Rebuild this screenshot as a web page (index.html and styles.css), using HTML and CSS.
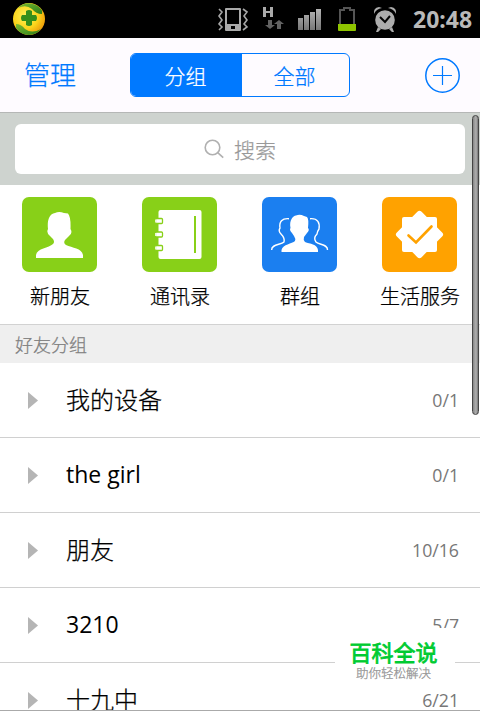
FILE: index.html
```html
<!DOCTYPE html>
<html lang="zh-CN">
<head>
<meta charset="utf-8">
<title>联系人</title>
<link rel="stylesheet" href="styles.css">
</head>
<body>
<div class="screen">
  <div class="status">
    <svg class="status-icons" width="405" height="38" viewBox="0 0 405 38">
      <defs>
        <radialGradient id="ball" cx=".4" cy=".4" r=".65"><stop offset="0" stop-color="#fff25a"/><stop offset=".6" stop-color="#fbd51c"/><stop offset="1" stop-color="#ed9a08"/></radialGradient>
        <linearGradient id="metal" x1="0" y1="0" x2="0" y2="1"><stop offset="0" stop-color="#b5b5b5"/><stop offset="1" stop-color="#777"/></linearGradient>
        <linearGradient id="leaf" x1="0" y1="0" x2="1" y2="1"><stop offset="0" stop-color="#7dbd32"/><stop offset="1" stop-color="#287c18"/></linearGradient>
      </defs>
      <circle cx="29" cy="19" r="16" fill="url(#ball)"/>
      <path d="M18 8C24 1 35 2 41 9Q43 11 42 14Q36 14 32 9Q26 4 18 8Z" fill="url(#leaf)"/>
      <path d="M16 24Q21 24 25 29Q32 34 41 29C35 37 22 37 16 28Z" fill="url(#leaf)"/>
      <path d="M26 11q3-2 6 0v4h4q2 3 0 6h-4v4q-3 2-6 0v-4h-4q-2-3 0-6h4Z" fill="#368f1b"/>
      <g fill="none" stroke="#a6a6a6" stroke-width="1.6">
        <path d="M219 9l3 3-3 4 3 4-3 4 3 3-3 3M243 9l4 3-3 4 3 4-3 4 3 3-4 3"/>
      </g>
      <path fill="#aaa" fill-rule="evenodd" d="M226 8h14q1 0 1 1v21q0 1-1 1h-14q-1 0-1-1V9q0-1 1-1Zm1 2v14h12V10Zm4 16v3h4v-3Z"/>
      <path fill="#aaa" d="M263 7h3v4h4V7h3v10h-3v-4h-4v4h-3Z"/>
      <path fill="#626262" d="M268 20h4v5h3l-5 4-5-4h3ZM277 29h4v-5h3l-5-4-5 4h3Z"/>
      <path fill="url(#metal)" d="M298 18h5v12h-5ZM304 15h5v15h-5ZM310 12h5v18h-5ZM316 9h5v21h-5Z"/>
      <path d="M340 24V10h4V8h6v2h4v14" fill="none" stroke="#555" stroke-width="2"/>
      <path fill="#8fc400" d="M338 24h18v6q0 1-1 1h-16q-1 0-1-1Z"/>
      <circle cx="385" cy="20" r="9.8" fill="#adadad"/>
      <path d="M374 14q-1-6 5-7l3 1q-6 1-8 6ZM396 14q1-6-5-7l-3 1q6 1 8 6ZM378 27l3 2-3 3h-2ZM392 27l-3 2 3 3h2Z" fill="#adadad"/>
      <path d="M380 17l5 5 5-6" fill="none" stroke="#050505" stroke-width="2"/>
    </svg>
    <span class="clock">20:48</span>
  </div>

  <header class="header">
    <span class="manage">管理</span>
    <div class="tabs"><span class="tab active">分组</span><span class="tab">全部</span></div>
    <svg class="add" width="36" height="36" viewBox="0 0 36 36" fill="none" stroke="#0079ff" stroke-width="1.5"><circle cx="17.500" cy="18.500" r="16.7"/><path d="M8 18.500h19M17.500 9v19" stroke-width="1.2"/></svg>
  </header>

  <div class="search">
    <div class="search-box">
      <svg width="20" height="20" viewBox="0 0 20 20" fill="none" stroke="#b0b0b0" stroke-width="1.6"><circle cx="8.500" cy="8.500" r="7.300"/><path d="M13.700 13.700l5.500 5"/></svg>
      <span>搜索</span>
    </div>
  </div>

  <nav class="shortcuts">
    <div class="shortcut">
      <svg class="tile green" viewBox="0 0 75 75"><path fill="#fff" d="M14 61V58C15 51 27 51 31 47Q33 45 31 42L28 39Q24 36 26 32C25 24 27 17 33 16Q37 14 42 16L46 16.500Q49 20 48.500 32Q51 36 47 39L43 43Q41 46 44 48C50 51 60 51 61 58V61Z"/></svg>
      <span>新朋友</span>
    </div>
    <div class="shortcut">
      <svg class="tile green" viewBox="0 0 75 75"><rect x="16.500" y="13" width="43" height="49" rx="2" fill="#fff"/><path d="M53 19v37" stroke="#88d018" stroke-width="2"/><g fill="#fff" stroke="#88d018" stroke-width="1.300"><rect x="13.500" y="21.500" width="7" height="5" rx="1"/><rect x="13.500" y="35" width="7" height="5" rx="1"/><rect x="13.500" y="48.500" width="7" height="5" rx="1"/></g><path d="M13.700 22.500v3M13.700 36v3M13.700 49.500v3" stroke="#fff"/></svg>
      <span>通讯录</span>
    </div>
    <div class="shortcut">
      <svg class="tile blue" viewBox="0 0 75 75"><path fill="#fff" d="M19.500 55V53C21 47 30 47 33 44Q34 42 32 39L30 36Q27 33 28.500 31C27 23 31 19 34 18.500Q38 17 42 19L45 20Q47 22 46 31Q48 33 45 36L42 40Q41 43 43 45C48 47 55 47 56 53V55Z"/><path fill="none" stroke="#fff" stroke-width="1.400" d="M27 21.700C20 21 17 25 18 31Q16 34 19 37Q23 41 22 45C19 48 9 47 9.700 53M48 21.700C56 21 58 26 57 32Q55 35 55 37Q51 41 54 45C57 48 66 47 65.500 53"/></svg>
      <span>群组</span>
    </div>
    <div class="shortcut">
      <svg class="tile orange" viewBox="0 0 75 75"><g fill="#fff"><rect x="20" y="20" width="35" height="35" rx="2"/><rect x="20" y="20" width="35" height="35" rx="3" transform="rotate(45 37.500 37.500)"/></g><path d="M26.500 38.500l7.500 7L49.500 29.500" fill="none" stroke="#ffa200" stroke-width="2.600" stroke-linecap="round"/></svg>
      <span>生活服务</span>
    </div>
  </nav>

  <div class="section">好友分组</div>
  <div class="list">
    <div class="row"><i class="arrow"></i><span class="name">我的设备</span><span class="count">0/1</span></div>
    <div class="row"><i class="arrow"></i><span class="name latin">the girl</span><span class="count">0/1</span></div>
    <div class="row"><i class="arrow"></i><span class="name">朋友</span><span class="count">10/16</span></div>
    <div class="row"><i class="arrow"></i><span class="name latin">3210</span><span class="count">5/7</span></div>
    <div class="row"><i class="arrow"></i><span class="name">十九中</span><span class="count">6/21</span></div>
  </div>
  <div class="scrollbar"></div>
  <div class="badge"><strong>百科全说</strong><span>助你轻松解决</span></div>
</div>
</body>
</html>
```
FILE: styles.css
```css
* { box-sizing: border-box; }
body { margin: 0; }
.screen {
  position: relative;
  display: flex;
  flex-direction: column;
  width: 480px;
  height: 711px;
  overflow: hidden;
  background: #fff;
  border-bottom: 1px solid #aaa;
  font-family: "Noto Sans CJK SC", sans-serif;
  font-weight: 300;
  -webkit-text-stroke: 0.25px currentColor;
  color: #000;
  white-space: nowrap;
}
.screen > * { flex-shrink: 0; }
.status {
  display: flex;
  align-items: center;
  height: 38px;
  background: #000;
}
.status-icons { display: block; }
.clock {
  margin-left: 8px;
  font-family: "Noto Sans", sans-serif;
  font-size: 23px;
  font-weight: 700;
  line-height: 38px;
  color: #b9b9b9;
  -webkit-text-stroke: 0;
}
.header {
  display: flex;
  align-items: center;
  height: 75px;
  padding: 0 19px 0 24px;
  background: #fefbff;
  border-bottom: 1px solid #b5b7b6;
  color: #0079ff;
}
.manage { width: 106px; padding-bottom: 4px; font-size: 26px; }
.tabs {
  display: flex;
  width: 220px;
  height: 44px;
  border: 1.5px solid #0079ff;
  border-radius: 6px;
  overflow: hidden;
}
.tab {
  flex: 1;
  padding-right: 2px;
  font-size: 21px;
  line-height: 42px;
  text-align: center;
}
.tab.active { flex: 0 0 111px; background: #0079ff; color: #fff; }
.add { margin-left: auto; }
.search {
  height: 72px;
  padding: 11px 15px;
  background: #ced3cf;
}
.search-box {
  display: flex;
  align-items: center;
  justify-content: center;
  gap: 10px;
  height: 50px;
  border-radius: 6px;
  background: #fff;
  color: #999;
  font-size: 21px;
}
.shortcuts {
  display: grid;
  grid-template-columns: repeat(4, 120px);
  height: 140px;
  padding-top: 12px;
  border-bottom: 1px solid #d2d2d2;
}
.shortcut { font-size: 20px; text-align: center; }
.tile {
  display: block;
  width: 75px;
  height: 75px;
  margin-left: 22px;
  border-radius: 7px;
}
.green { background: #88d018; }
.blue { background: #1b7ff0; }
.orange { background: #ffa200; }
.shortcut span { display: block; line-height: 47px; }
.section {
  height: 38px;
  padding-left: 15px;
  background: #efefef;
  color: #808080;
  font-size: 18px;
  line-height: 39px;
}
.list { height: 347px; overflow: hidden; }
.row {
  display: flex;
  align-items: center;
  height: 75px;
  padding: 0 21px 0 28px;
  border-bottom: 1px solid #d0d0d0;
}
.arrow {
  width: 10px;
  height: 17px;
  margin: 1px 28px 0 0;
  background: #b5b5b5;
  clip-path: polygon(0 0, 100% 50%, 0 100%);
}
.name { flex: 1; padding-bottom: 3px; font-size: 24px; }
.latin {
  padding-bottom: 2px;
  font-family: "Open Sans", sans-serif;
  font-size: 23px;
  font-weight: 400;
  -webkit-text-stroke: 0;
}
.count {
  color: #777;
  font-family: "Open Sans", sans-serif;
  font-size: 17.700px;
  font-weight: 400;
  -webkit-text-stroke: 0;
}
.scrollbar {
  position: absolute;
  top: 115px;
  right: 1px;
  width: 7px;
  height: 300px;
  border: 1px solid #444;
  border-radius: 4px;
  background: linear-gradient(90deg, #868686, #b0b0b0 60%, #777);
}
.badge {
  position: absolute;
  left: 335px;
  top: 628px;
  width: 120px;
  height: 62px;
  padding: 9px 3px 0 0;
  background: #fff;
  text-align: center;
}
.badge strong {
  display: block;
  color: #00cb32;
  font-size: 22px;
  font-weight: 400;
  line-height: 28px;
  -webkit-text-stroke: 0.8px currentColor;
}
.badge span {
  display: block;
  color: #929292;
  font-size: 12.500px;
  line-height: 16px;
}
```
